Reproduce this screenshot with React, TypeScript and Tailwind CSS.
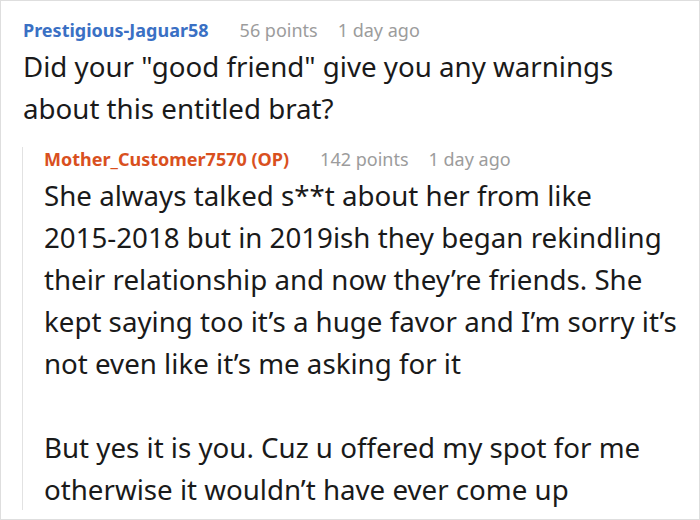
function Header({ name, color, points }: { name: string; color: string; points: string }) {
  return (
    <div className="flex items-baseline text-[18px] leading-[24px] whitespace-nowrap">
      <span className={`font-bold ${color}`}>{name}</span>
      <span className="ml-[31px] text-[#9c9c9c]">{points}</span>
      <span className="ml-[20px] text-[#9c9c9c]">1 day ago</span>
    </div>
  );
}

export default function App() {
  return (
    <div
      className="w-[700px] h-[520px] bg-white border border-[#dedede] overflow-hidden"
      style={{ fontFamily: '"Noto Sans", sans-serif' }}
    >
      <div className="pl-[22px] pt-[17px]">
        <Header name="Prestigious-Jaguar58" color="text-[#3a70c4]" points="56 points" />
        <p className="mt-[3px] text-[27.7px] leading-[42px] text-[#1a1a1a] whitespace-nowrap">
          Did your "good friend" give you any warnings
          <br />
          about this entitled brat?
        </p>
        <div className="mt-[29px] -ml-px border-l border-[#e2e2e2] pl-[21px]">
          <div className="-mt-[11px]">
            <Header name="Mother_Customer7570 (OP)" color="text-[#d9501e]" points="142 points" />
          </div>
          <div className="mt-[3px] text-[27.7px] leading-[42px] text-[#1a1a1a] whitespace-nowrap -mb-[8px]">
            <p>
              She always talked s**t about her from like
              <br />
              2015-2018 but in 2019ish they began rekindling
              <br />
              their relationship and now they’re friends. She
              <br />
              kept saying too it’s a huge favor and I’m sorry it’s
              <br />
              not even like it’s me asking for it
            </p>
            <p className="mt-[42px]">
              But yes it is you. Cuz u offered my spot for me
              <br />
              otherwise it wouldn’t have ever come up
            </p>
          </div>
        </div>
      </div>
    </div>
  );
}
